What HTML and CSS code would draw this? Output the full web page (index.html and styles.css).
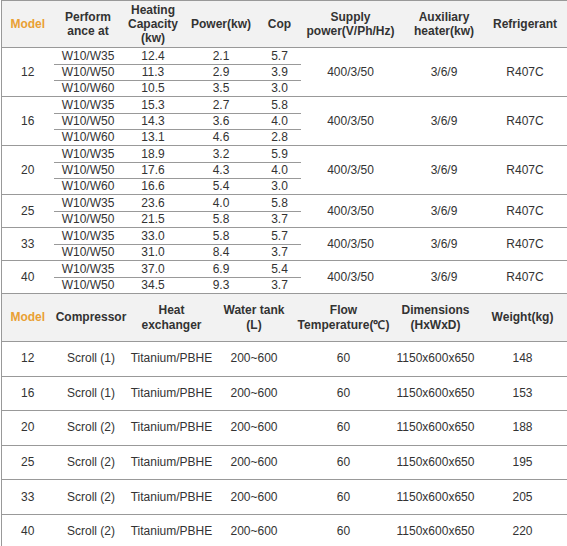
FILE: index.html
```html
<!DOCTYPE html>
<html>
<head>
<meta charset="utf-8">
<link rel="stylesheet" href="styles.css">
</head>
<body>
<div class="wrap">
<table class="spec t1">
  <colgroup>
    <col class="c52"><col class="c69"><col class="c61"><col class="c75"><col class="c42"><col class="c100"><col class="c87"><col class="c80">
  </colgroup>
  <thead>
    <tr>
      <th class="model">Model</th>
      <th>Perform<br>ance at</th>
      <th>Heating<br>Capacity<br>(kw)</th>
      <th>Power(kw)</th>
      <th>Cop</th>
      <th>Supply<br>power(V/Ph/Hz)</th>
      <th>Auxiliary<br>heater(kw)</th>
      <th class="last">Refrigerant</th>
    </tr>
  </thead>
  <tbody>
    <tr class="first"><td rowspan="3">12</td><td>W10/W35</td><td>12.4</td><td>2.1</td><td>5.7</td><td rowspan="3">400/3/50</td><td rowspan="3">3/6/9</td><td rowspan="3" class="last">R407C</td></tr>
    <tr><td>W10/W50</td><td>11.3</td><td>2.9</td><td>3.9</td></tr>
    <tr><td>W10/W60</td><td>10.5</td><td>3.5</td><td>3.0</td></tr>

    <tr class="first"><td rowspan="3">16</td><td>W10/W35</td><td>15.3</td><td>2.7</td><td>5.8</td><td rowspan="3">400/3/50</td><td rowspan="3">3/6/9</td><td rowspan="3" class="last">R407C</td></tr>
    <tr><td>W10/W50</td><td>14.3</td><td>3.6</td><td>4.0</td></tr>
    <tr><td>W10/W60</td><td>13.1</td><td>4.6</td><td>2.8</td></tr>

    <tr class="first"><td rowspan="3">20</td><td>W10/W35</td><td>18.9</td><td>3.2</td><td>5.9</td><td rowspan="3">400/3/50</td><td rowspan="3">3/6/9</td><td rowspan="3" class="last">R407C</td></tr>
    <tr><td>W10/W50</td><td>17.6</td><td>4.3</td><td>4.0</td></tr>
    <tr><td>W10/W60</td><td>16.6</td><td>5.4</td><td>3.0</td></tr>

    <tr class="first"><td rowspan="2">25</td><td>W10/W35</td><td>23.6</td><td>4.0</td><td>5.8</td><td rowspan="2">400/3/50</td><td rowspan="2">3/6/9</td><td rowspan="2" class="last">R407C</td></tr>
    <tr><td>W10/W50</td><td>21.5</td><td>5.8</td><td>3.7</td></tr>

    <tr class="first"><td rowspan="2">33</td><td>W10/W35</td><td>33.0</td><td>5.8</td><td>5.7</td><td rowspan="2">400/3/50</td><td rowspan="2">3/6/9</td><td rowspan="2" class="last">R407C</td></tr>
    <tr><td>W10/W50</td><td>31.0</td><td>8.4</td><td>3.7</td></tr>

    <tr class="first"><td rowspan="2">40</td><td>W10/W35</td><td>37.0</td><td>6.9</td><td>5.4</td><td rowspan="2">400/3/50</td><td rowspan="2">3/6/9</td><td rowspan="2" class="last">R407C</td></tr>
    <tr><td>W10/W50</td><td>34.5</td><td>9.3</td><td>3.7</td></tr>
  </tbody>
</table>

<table class="spec t2">
  <colgroup>
    <col class="c52"><col class="c75"><col class="c86"><col class="c79"><col class="c100"><col class="c84"><col class="c90">
  </colgroup>
  <thead>
    <tr>
      <th class="model">Model</th>
      <th>Compressor</th>
      <th>Heat<br>exchanger</th>
      <th>Water tank<br>(L)</th>
      <th>Flow<br>Temperature(℃)</th>
      <th>Dimensions<br>(HxWxD)</th>
      <th>Weight(kg)</th>
    </tr>
  </thead>
  <tbody>
    <tr><td>12</td><td>Scroll (1)</td><td>Titanium/PBHE</td><td>200~600</td><td>60</td><td>1150x600x650</td><td>148</td></tr>
    <tr><td>16</td><td>Scroll (1)</td><td>Titanium/PBHE</td><td>200~600</td><td>60</td><td>1150x600x650</td><td>153</td></tr>
    <tr><td>20</td><td>Scroll (2)</td><td>Titanium/PBHE</td><td>200~600</td><td>60</td><td>1150x600x650</td><td>188</td></tr>
    <tr><td>25</td><td>Scroll (2)</td><td>Titanium/PBHE</td><td>200~600</td><td>60</td><td>1150x600x650</td><td>195</td></tr>
    <tr><td>33</td><td>Scroll (2)</td><td>Titanium/PBHE</td><td>200~600</td><td>60</td><td>1150x600x650</td><td>205</td></tr>
    <tr><td>40</td><td>Scroll (2)</td><td>Titanium/PBHE</td><td>200~600</td><td>60</td><td>1150x600x650</td><td>220</td></tr>
  </tbody>
</table>
</div>
</body>
</html>
```

FILE: styles.css
```css
html, body {
  margin: 0;
  padding: 0;
  overflow: hidden;
  background: #fff;
}
body {
  font-family: "Liberation Sans", Arial, sans-serif;
  font-size: 12px;
  color: #333;
}
.wrap {
  margin-left: 1px;
}
.spec {
  border-collapse: collapse;
  table-layout: fixed;
  width: 566px;
  border-left: 1px solid #999;
}
.t1 {
  border-top: 1px solid #999;
}
.c42 { width: 42px; }
.c52 { width: 52px; }
.c61 { width: 61px; }
.c69 { width: 69px; }
.c75 { width: 75px; }
.c79 { width: 79px; }
.c80 { width: 80px; }
.c84 { width: 84px; }
.c86 { width: 86px; }
.c87 { width: 87px; }
.c90 { width: 90px; }
.c100 { width: 100px; }

.spec th {
  background: #f2f2f2;
  font-weight: bold;
  text-align: center;
  vertical-align: middle;
  padding: 0;
  line-height: 14px;
  height: 46px;
  border-bottom: 1px solid #999;
  color: #333;
}
.spec th.model {
  color: #e9a034;
}
.spec td {
  text-align: center;
  vertical-align: middle;
  padding: 0;
  height: 15px;
  line-height: 15px;
  border-bottom: 1px solid #999;
}
.t1 tr.first td {
  height: 16px;
}
.t1 .last {
  padding-right: 5px;
}
.t2 th {
  height: 47px;
  line-height: 15px;
}
.t2 td {
  height: 33.6px;
}
```
